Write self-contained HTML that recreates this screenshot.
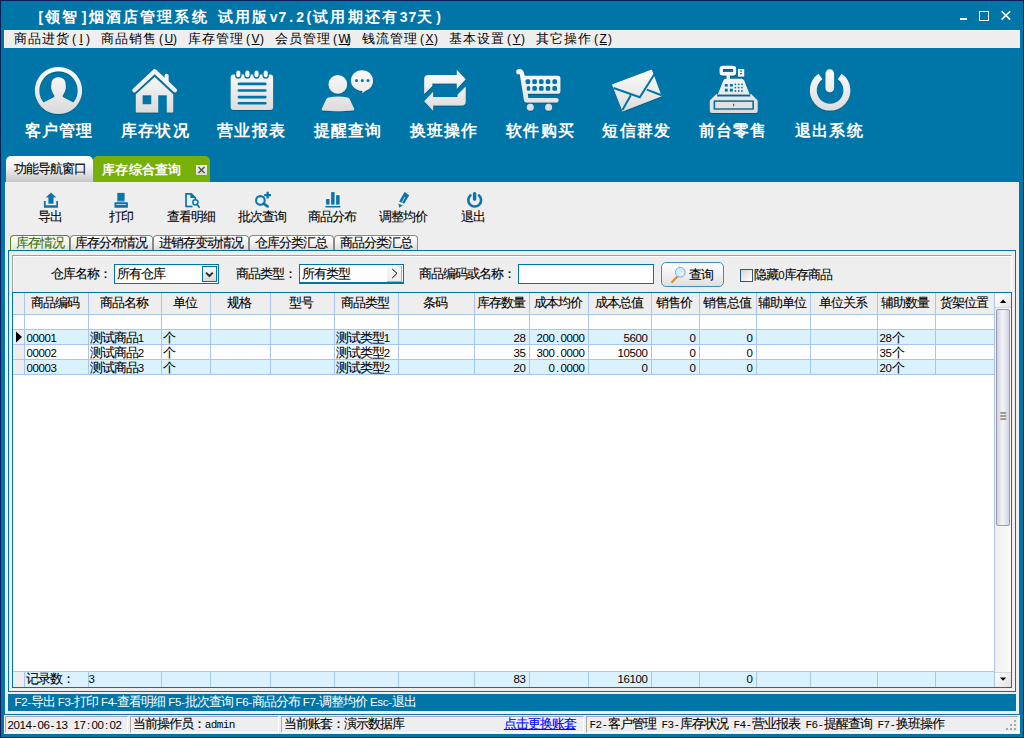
<!DOCTYPE html><html><head><meta charset="utf-8"><style>
html,body{margin:0;padding:0;}
body{width:1024px;height:738px;overflow:hidden;position:relative;background:#0075a8;font-family:"Liberation Sans", sans-serif;}
div{box-sizing:border-box;}
.t{position:absolute;white-space:nowrap;line-height:1;}
.t i{display:inline-block;font-style:normal;text-align:center;}
.t b{font-weight:inherit;-webkit-text-stroke:0.1px currentColor;}
</style></head><body><div style="position:absolute;left:0px;top:0px;width:1024px;height:738px;border:1px solid #0a1e5a;"></div>
<div class="t" style="left:36.5px;top:9.5px;color:#fff;font-family:'Liberation Sans',sans-serif;font-size:14.5px;font-weight:bold;"><span style="font-family:'Liberation Sans',sans-serif;font-size:14px"><i style="width:8.8px">[</i></span><span style="font-size:14.5px;letter-spacing:2.20px">领智</span><span style="font-family:'Liberation Sans',sans-serif;font-size:14px"><i style="width:8.8px">]</i></span><span style="font-size:14.5px;letter-spacing:2.20px">烟酒店管理系统</span><span style="font-family:'Liberation Sans',sans-serif;font-size:14px"><i style="width:8.8px">&nbsp;</i></span><span style="font-size:14.5px;letter-spacing:2.20px">试用版</span><span style="font-family:'Liberation Sans',sans-serif;font-size:14px"><i style="width:8.8px">v</i><i style="width:8.8px">7</i><i style="width:8.8px">.</i><i style="width:8.8px">2</i><i style="width:8.8px">(</i></span><span style="font-size:14.5px;letter-spacing:2.20px">试用期还有</span><span style="font-family:'Liberation Sans',sans-serif;font-size:14px"><i style="width:8.8px">3</i><i style="width:8.8px">7</i></span><span style="font-size:14.5px;letter-spacing:2.20px">天</span><span style="font-family:'Liberation Sans',sans-serif;font-size:14px"><i style="width:8.8px">)</i></span></div>
<div style="position:absolute;left:960px;top:18px;width:7px;height:2px;background:#fff;"></div>
<div style="position:absolute;left:979px;top:11px;width:9.5px;height:9.5px;border:1.5px solid #fff;"></div>
<svg style="position:absolute;left:1000px;top:10px" width="12" height="12"><path d="M1.6 1.2L10.2 9.6M10.2 1.2L1.6 9.6" stroke="#fff" stroke-width="1.6"/></svg>
<div style="position:absolute;left:4px;top:30px;width:1016px;height:18px;background:#eeeeee;border-top:1px solid #fbf6f2;border-left:1px solid #fbf6f2;"></div>
<div class="t" style="left:13.8px;top:33px;color:#000;font-family:'Liberation Sans',sans-serif;font-size:12.5px;"><span style="font-size:12.5px;letter-spacing:1.20px">商品进货</span><span style="font-family:'Liberation Sans',sans-serif;font-size:12px"><i style="width:7.0px">(</i><i style="width:7.0px"><u>I</u></i><i style="width:7.0px">)</i></span></div>
<div class="t" style="left:100.8px;top:33px;color:#000;font-family:'Liberation Sans',sans-serif;font-size:12.5px;"><span style="font-size:12.5px;letter-spacing:1.20px">商品销售</span><span style="font-family:'Liberation Sans',sans-serif;font-size:12px"><i style="width:7.0px">(</i><i style="width:7.0px"><u>U</u></i><i style="width:7.0px">)</i></span></div>
<div class="t" style="left:187.8px;top:33px;color:#000;font-family:'Liberation Sans',sans-serif;font-size:12.5px;"><span style="font-size:12.5px;letter-spacing:1.20px">库存管理</span><span style="font-family:'Liberation Sans',sans-serif;font-size:12px"><i style="width:7.0px">(</i><i style="width:7.0px"><u>V</u></i><i style="width:7.0px">)</i></span></div>
<div class="t" style="left:274.8px;top:33px;color:#000;font-family:'Liberation Sans',sans-serif;font-size:12.5px;"><span style="font-size:12.5px;letter-spacing:1.20px">会员管理</span><span style="font-family:'Liberation Sans',sans-serif;font-size:12px"><i style="width:7.0px">(</i><i style="width:7.0px"><u>W</u></i><i style="width:7.0px">)</i></span></div>
<div class="t" style="left:361.8px;top:33px;color:#000;font-family:'Liberation Sans',sans-serif;font-size:12.5px;"><span style="font-size:12.5px;letter-spacing:1.20px">钱流管理</span><span style="font-family:'Liberation Sans',sans-serif;font-size:12px"><i style="width:7.0px">(</i><i style="width:7.0px"><u>X</u></i><i style="width:7.0px">)</i></span></div>
<div class="t" style="left:448.8px;top:33px;color:#000;font-family:'Liberation Sans',sans-serif;font-size:12.5px;"><span style="font-size:12.5px;letter-spacing:1.20px">基本设置</span><span style="font-family:'Liberation Sans',sans-serif;font-size:12px"><i style="width:7.0px">(</i><i style="width:7.0px"><u>Y</u></i><i style="width:7.0px">)</i></span></div>
<div class="t" style="left:535.8px;top:33px;color:#000;font-family:'Liberation Sans',sans-serif;font-size:12.5px;"><span style="font-size:12.5px;letter-spacing:1.20px">其它操作</span><span style="font-family:'Liberation Sans',sans-serif;font-size:12px"><i style="width:7.0px">(</i><i style="width:7.0px"><u>Z</u></i><i style="width:7.0px">)</i></span></div>
<svg style="position:absolute;left:0;top:0" width="1024" height="160" viewBox="0 0 1024 160">
<defs><linearGradient id="wg" gradientUnits="userSpaceOnUse" x1="0" y1="66" x2="0" y2="115"><stop offset="0" stop-color="#ffffff"/><stop offset="1" stop-color="#d9d9d9"/></linearGradient><clipPath id="cc"><circle cx="58.5" cy="90.5" r="19.9"/></clipPath><filter id="sh" x="-10%" y="-10%" width="120%" height="130%"><feDropShadow dx="0" dy="1" stdDeviation="0.6" flood-color="#003050" flood-opacity="0.45"/></filter></defs>
<g fill="url(#wg)" filter="url(#sh)">
<path fill-rule="evenodd" d="M58.5 66.9A23.6 23.6 0 1 1 58.49 66.9ZM58.5 71.3A19.2 19.2 0 1 0 58.51 71.3Z"/>
<path clip-path="url(#cc)" d="M51.4 84C51.4 79.5 54.5 77.2 58.5 77.2C62.5 77.2 65.6 79.5 65.6 84L65.9 87.5C65.6 90.5 64 93.5 62.7 95.5L62.7 97L73.5 102.4L80 125L37 125L43.5 102.4L54.3 97L54.3 95.5C53 93.5 51.4 90.5 51.1 87.5Z"/>
<path d="M134.4 90.2L154.7 71.2L175 90.2" fill="none" stroke="url(#wg)" stroke-width="4.3" stroke-linecap="round" stroke-linejoin="round"/>
<path d="M164.6 75.6Q164.6 73.8 166.6 73.8Q168.6 73.8 168.6 75.6L168.6 83L164.6 79.3Z"/>
<path fill-rule="evenodd" d="M135.8 94.2L154.7 76.9L173.2 94.2L173.2 111.4Q173.2 112.4 172.2 112.4L166.8 112.4L166.8 95.2L158.2 95.2L158.2 112.4L136.8 112.4Q135.8 112.4 135.8 111.4ZM142.6 95.2L151.3 95.2L151.3 104.2L142.6 104.2Z"/>
<path fill-rule="evenodd" d="M233.7 74.4L270.1 74.4Q273.1 74.4 273.1 77.4L273.1 107.1Q273.1 110.1 270.1 110.1L233.7 110.1Q230.7 110.1 230.7 107.1L230.7 77.4Q230.7 74.4 233.7 74.4Z"/>
<ellipse cx="238.3" cy="74.4" rx="3.3" ry="4.4" fill="#0075a8" filter="none"/>
<ellipse cx="238.3" cy="73.9" rx="2.1" ry="3.3" fill="#fff" filter="none"/>
<ellipse cx="247.4" cy="74.4" rx="3.3" ry="4.4" fill="#0075a8" filter="none"/>
<ellipse cx="247.4" cy="73.9" rx="2.1" ry="3.3" fill="#fff" filter="none"/>
<ellipse cx="256.5" cy="74.4" rx="3.3" ry="4.4" fill="#0075a8" filter="none"/>
<ellipse cx="256.5" cy="73.9" rx="2.1" ry="3.3" fill="#fff" filter="none"/>
<ellipse cx="265.7" cy="74.4" rx="3.3" ry="4.4" fill="#0075a8" filter="none"/>
<ellipse cx="265.7" cy="73.9" rx="2.1" ry="3.3" fill="#fff" filter="none"/>
<rect x="237.6" y="82.60000000000001" width="29" height="2.6" rx="1.3" fill="#0075a8" filter="none"/>
<rect x="237.6" y="89.2" width="29" height="2.6" rx="1.3" fill="#0075a8" filter="none"/>
<rect x="237.6" y="95.8" width="29" height="2.6" rx="1.3" fill="#0075a8" filter="none"/>
<rect x="237.6" y="101.9" width="29" height="2.6" rx="1.3" fill="#0075a8" filter="none"/>
<circle cx="337.8" cy="84.4" r="9.3"/>
<path d="M328.5 97.6Q338 95.6 347.6 97.6Q349.3 98 349.9 99.5L354.2 108.8Q354.6 110.4 353 110.5Q338 111.8 323 110.5Q321.4 110.4 321.8 108.8L326.1 99.5Q326.7 98 328.5 97.6Z"/>
<path d="M362 70.3C368.2 70.3 373 74.8 373 80.7C373 86.2 369 89.8 365.5 90.8L362.2 93.2L362.5 91C356 90.5 351 86.3 351 80.7C351 74.8 355.8 70.3 362 70.3Z"/>
<circle cx="356.5" cy="80.6" r="1.5" fill="#0075a8" filter="none"/>
<circle cx="362.3" cy="80.6" r="1.5" fill="#0075a8" filter="none"/>
<circle cx="368.0" cy="80.6" r="1.5" fill="#0075a8" filter="none"/>
<path d="M424.2 94L424.2 79Q424.2 75 428.2 75L456.8 75L456.8 69.8L465.7 79.3L456.8 88.8L456.8 83.6L432.3 83.6L432.3 86Z"/>
<path d="M465.7 86.5L465.7 101.5Q465.7 105.5 461.7 105.5L433.1 105.5L433.1 110.7L424.2 101.2L433.1 91.7L433.1 96.9L457.6 96.9L457.6 94.5Z"/>
<path d="M516.2 71.5Q516.5 69 519.5 69Q523.5 69 524.2 74.2L525 75.8L557.9 75.8Q560.4 75.8 560.4 78.3L560.4 91.3Q560.4 93.8 557.9 93.8L527.8 93.8L528.3 97.9L556.4 97.9Q558.7 97.9 558.7 100.25Q558.7 102.6 556.4 102.6L526.4 102.6Q524.3 102.6 524 100.5L519.8 74.3L517.5 74.2Q516 73.8 516.2 71.5Z"/>
<rect x="525.6" y="79.2" width="4.6" height="4.8" rx="1.6" fill="#0075a8" filter="none"/>
<rect x="532.3" y="79.2" width="4.6" height="4.8" rx="1.6" fill="#0075a8" filter="none"/>
<rect x="539.0" y="79.2" width="4.6" height="4.8" rx="1.6" fill="#0075a8" filter="none"/>
<rect x="545.7" y="79.2" width="4.6" height="4.8" rx="1.6" fill="#0075a8" filter="none"/>
<rect x="552.4" y="79.2" width="4.6" height="4.8" rx="1.6" fill="#0075a8" filter="none"/>
<rect x="526.8" y="86.0" width="3.4" height="4.8" rx="1.6" fill="#0075a8" filter="none"/>
<rect x="532.3" y="86.0" width="4.6" height="4.8" rx="1.6" fill="#0075a8" filter="none"/>
<rect x="539.0" y="86.0" width="4.6" height="4.8" rx="1.6" fill="#0075a8" filter="none"/>
<rect x="545.7" y="86.0" width="4.6" height="4.8" rx="1.6" fill="#0075a8" filter="none"/>
<rect x="552.4" y="86.0" width="4.6" height="4.8" rx="1.6" fill="#0075a8" filter="none"/>
<circle cx="530.3" cy="107.3" r="3.5"/><circle cx="548.6" cy="107.3" r="3.5"/>
<path d="M612.7 84.8L651.4 70.3L660.9 96L622.9 110.8Z" stroke="url(#wg)" stroke-width="1.2" stroke-linejoin="round"/>
<g filter="none" fill="none" stroke="#0075a8" stroke-width="2"><path d="M613.5 88L639.8 97.3L655 73.2"/><path d="M622.5 110L630.8 95.2"/><path d="M646.8 89.6L661.5 95.2"/></g>
<path fill-rule="evenodd" d="M722.6 65.7L733.1 65.7Q736.1 65.7 736.1 68.7L736.1 72.5Q736.1 75.5 733.1 75.5L729.9 75.5L729.9 78.8L741.7 78.8Q743.4 78.8 744.2 80.5L749.7 94.6L717.8 94.6L723.3 80.5Q724 78.8 725.8 78.8L726.6 78.8L726.6 75.5L722.6 75.5Q719.6 75.5 719.6 72.5L719.6 68.7Q719.6 65.7 722.6 65.7ZM722.9 69L733.2 69L733.2 71.9L722.9 71.9Z"/>
<rect x="738" y="69" width="6.2" height="7.6"/>
<g fill="#0075a8" filter="none"><rect x="724.8" y="84" width="2.9" height="2.6"/><rect x="729.9" y="84" width="2.9" height="2.6"/><rect x="724.8" y="88.7" width="2.9" height="2.9"/><rect x="729.9" y="88.7" width="2.9" height="2.9"/>
<circle cx="735.4" cy="84.3" r="0.9"/>
<circle cx="735.4" cy="87.6" r="0.9"/>
<circle cx="735.4" cy="90.9" r="0.9"/>
<circle cx="738.7" cy="84.3" r="0.9"/>
<circle cx="738.7" cy="87.6" r="0.9"/>
<circle cx="738.7" cy="90.9" r="0.9"/>
<circle cx="742" cy="84.3" r="0.9"/>
<circle cx="742" cy="87.6" r="0.9"/>
<circle cx="742" cy="90.9" r="0.9"/>
<rect x="740" y="70.5" width="2" height="1.2"/><rect x="740" y="73" width="2" height="1.2"/></g>
<path fill-rule="evenodd" d="M709.8 100.6L716.4 94.1L717.4 94.1L717 96.4L750.5 96.4L750.1 94.1L751.1 94.1L757.7 100.6L757.7 110.4Q757.7 112.9 755.2 112.9L712.3 112.9Q709.8 112.9 709.8 110.4ZM714.2 100.3L753.3 100.3Q754 100.3 754 101L754 109.1Q754 109.8 753.3 109.8L714.2 109.8Q713.5 109.8 713.5 109.1L713.5 101Q713.5 100.3 714.2 100.3Z"/>
<rect x="715.2" y="101.9" width="37.1" height="6.3" fill="#e2e2e2" filter="none"/>
<path d="M733 103.3L734.6 105L733 106.7Z" fill="#0075a8" filter="none"/>
<path d="M820.5 76.5A16.8 16.8 0 1 0 839.7 76.5" fill="none" stroke="url(#wg)" stroke-width="6.9"/>
<rect x="825.5" y="69.2" width="8.6" height="23.1" rx="4.3"/>
</g></svg>
<div class="t" style="left:13.5px;width:90px;text-align:center;top:123px;color:#fff;font-weight:bold;font-size:15.5px;letter-spacing:1.2px;text-indent:1.2px;">客户管理</div>
<div class="t" style="left:109.8px;width:90px;text-align:center;top:123px;color:#fff;font-weight:bold;font-size:15.5px;letter-spacing:1.2px;text-indent:1.2px;">库存状况</div>
<div class="t" style="left:206.1px;width:90px;text-align:center;top:123px;color:#fff;font-weight:bold;font-size:15.5px;letter-spacing:1.2px;text-indent:1.2px;">营业报表</div>
<div class="t" style="left:302.4px;width:90px;text-align:center;top:123px;color:#fff;font-weight:bold;font-size:15.5px;letter-spacing:1.2px;text-indent:1.2px;">提醒查询</div>
<div class="t" style="left:398.7px;width:90px;text-align:center;top:123px;color:#fff;font-weight:bold;font-size:15.5px;letter-spacing:1.2px;text-indent:1.2px;">换班操作</div>
<div class="t" style="left:495.0px;width:90px;text-align:center;top:123px;color:#fff;font-weight:bold;font-size:15.5px;letter-spacing:1.2px;text-indent:1.2px;">软件购买</div>
<div class="t" style="left:591.3px;width:90px;text-align:center;top:123px;color:#fff;font-weight:bold;font-size:15.5px;letter-spacing:1.2px;text-indent:1.2px;">短信群发</div>
<div class="t" style="left:687.6px;width:90px;text-align:center;top:123px;color:#fff;font-weight:bold;font-size:15.5px;letter-spacing:1.2px;text-indent:1.2px;">前台零售</div>
<div class="t" style="left:783.9px;width:90px;text-align:center;top:123px;color:#fff;font-weight:bold;font-size:15.5px;letter-spacing:1.2px;text-indent:1.2px;">退出系统</div>
<div style="position:absolute;left:6px;top:156px;width:87px;height:26px;border-radius:5px 5px 0 0;background:linear-gradient(#ffffff,#f4f4f4 40%,#c8c8c8);"></div>
<div class="t" style="left:13.8px;top:163px;color:#000;font-family:'Liberation Sans',sans-serif;font-size:12.6px;"><b style="font-size:12.6px;letter-spacing:-1.00px">功能导航窗口</b></div>
<div style="position:absolute;left:93px;top:156px;width:117px;height:26px;border-radius:5px 5px 0 0;background:#78b00a;"></div>
<div class="t" style="left:102.3px;top:163.5px;color:#fff;font-family:'Liberation Sans',sans-serif;font-size:12.5px;font-weight:bold;"><span style="font-size:12.5px;letter-spacing:0.20px">库存综合查询</span></div>
<div style="position:absolute;left:196px;top:165px;width:11px;height:10px;background:linear-gradient(#f4f4f4,#d8d8d8);"></div>
<svg style="position:absolute;left:196px;top:165px" width="11" height="10"><path d="M2.5 2L8.5 8M8.5 2L2.5 8" stroke="#4a5a3a" stroke-width="1.5"/></svg>
<div style="position:absolute;left:5px;top:182px;width:1014px;height:532px;background:#eeeeee;border-left:1px solid #fbfaf8;"></div>
<svg style="position:absolute;left:0;top:180px" width="520" height="40" viewBox="0 180 520 40">
<g fill="#0a74ad">
<path d="M51 192.5L56.2 197.6L53.5 197.6L53.5 203.8L48.4 203.8L48.4 197.6L45.8 197.6Z"/>
<path d="M43.9 200.9L45.7 200.9L45.7 205.2L56.3 205.2L56.3 200.9L58 200.9L58 207.7L43.9 207.7Z"/>
<rect x="117.3" y="192.9" width="7.3" height="8"/>
<rect x="117.3" y="200.9" width="7.3" height="1.4" fill="#7ab0d0"/>
<path fill-rule="evenodd" d="M114.5 202.3L127.9 202.3L127.9 207.7L114.5 207.7ZM116.2 204.2L126 204.2L126 205L116.2 205Z"/>
<path d="M186 207V193.8H191.3L195.3 197.8V199.2" fill="none" stroke="#0a74ad" stroke-width="1.7"/>
<path d="M186 206.5H192.5" fill="none" stroke="#0a74ad" stroke-width="1.7"/>
<path d="M190.4 194L195.5 198.1L190.4 198.1Z"/>
<circle cx="195.4" cy="202.3" r="2.6" fill="none" stroke="#0a74ad" stroke-width="1.5"/>
<path d="M197 204.3L199.2 207.3" stroke="#0a74ad" stroke-width="1.6" stroke-linecap="round"/>
<circle cx="260.4" cy="200.4" r="4.3" fill="none" stroke="#0a74ad" stroke-width="2.1"/>
<path d="M263.6 203.6L267.6 206.4" stroke="#0a74ad" stroke-width="2.6" stroke-linecap="round"/>
<path d="M266.5 191.8H268.8V194H271V196.2H268.8V198.4H266.5V196.2H264.2V194H266.5Z"/>
<rect x="326.1" y="199" width="3.4" height="5.6"/><rect x="331.1" y="192.1" width="3.5" height="12.5"/><rect x="336.1" y="195.2" width="3.5" height="9.4"/>
<path d="M325.1 205.9H340.7L340 207.6H325.8Z"/>
<path d="M404.5 192.1L409.2 195.2L404.2 203.8L399.2 201.5Z"/>
<path d="M404.9 197L402.2 202.3" stroke="#eeeeee" stroke-width="0.8"/>
<path d="M398.5 203.4L402.8 205.4L399.3 207.7Z"/>
<path d="M470.4 195.4A6.4 6.4 0 1 0 479 195.4" fill="none" stroke="#0a74ad" stroke-width="2.6" stroke-linecap="round"/>
<rect x="472.9" y="192" width="3.4" height="8.8" rx="1.6"/>
</g></svg>
<div class="t" style="left:38.2px;top:211px;color:#000;font-family:'Liberation Sans',sans-serif;font-size:12.6px;"><b style="font-size:12.6px;letter-spacing:-1.00px">导出</b></div>
<div class="t" style="left:108.7px;top:211px;color:#000;font-family:'Liberation Sans',sans-serif;font-size:12.6px;"><b style="font-size:12.6px;letter-spacing:-1.00px">打印</b></div>
<div class="t" style="left:167.2px;top:211px;color:#000;font-family:'Liberation Sans',sans-serif;font-size:12.6px;"><b style="font-size:12.6px;letter-spacing:-1.00px">查看明细</b></div>
<div class="t" style="left:237.7px;top:211px;color:#000;font-family:'Liberation Sans',sans-serif;font-size:12.6px;"><b style="font-size:12.6px;letter-spacing:-1.00px">批次查询</b></div>
<div class="t" style="left:308.2px;top:211px;color:#000;font-family:'Liberation Sans',sans-serif;font-size:12.6px;"><b style="font-size:12.6px;letter-spacing:-1.00px">商品分布</b></div>
<div class="t" style="left:378.7px;top:211px;color:#000;font-family:'Liberation Sans',sans-serif;font-size:12.6px;"><b style="font-size:12.6px;letter-spacing:-1.00px">调整均价</b></div>
<div class="t" style="left:461.2px;top:211px;color:#000;font-family:'Liberation Sans',sans-serif;font-size:12.6px;"><b style="font-size:12.6px;letter-spacing:-1.00px">退出</b></div>
<div style="position:absolute;left:10px;top:235px;width:60px;height:16px;border:1.5px solid #5a8a18;border-bottom:none;border-radius:4px 4px 0 0;background:linear-gradient(#ffffff,#f4f8f0 40%,#d8e8d4);"></div>
<div class="t" style="left:15.8px;top:237px;color:#3f6e08;font-family:'Liberation Sans',sans-serif;font-size:12.6px;"><b style="font-size:12.6px;letter-spacing:-1.00px">库存情况</b></div>
<div style="position:absolute;left:70px;top:235px;width:83px;height:16px;border:1px solid #8a8a8a;border-bottom:none;border-radius:4px 4px 0 0;background:linear-gradient(#ffffff,#f4f4f4 40%,#d8d8d8);"></div>
<div class="t" style="left:75.3px;top:237px;color:#000;font-family:'Liberation Sans',sans-serif;font-size:12.6px;"><b style="font-size:12.6px;letter-spacing:-1.00px">库存分布情况</b></div>
<div style="position:absolute;left:153px;top:235px;width:96px;height:16px;border:1px solid #8a8a8a;border-bottom:none;border-radius:4px 4px 0 0;background:linear-gradient(#ffffff,#f4f4f4 40%,#d8d8d8);"></div>
<div class="t" style="left:158.8px;top:237px;color:#000;font-family:'Liberation Sans',sans-serif;font-size:12.6px;"><b style="font-size:12.6px;letter-spacing:-1.00px">进销存变动情况</b></div>
<div style="position:absolute;left:249px;top:235px;width:85px;height:16px;border:1px solid #8a8a8a;border-bottom:none;border-radius:4px 4px 0 0;background:linear-gradient(#ffffff,#f4f4f4 40%,#d8d8d8);"></div>
<div class="t" style="left:255.3px;top:237px;color:#000;font-family:'Liberation Sans',sans-serif;font-size:12.6px;"><b style="font-size:12.6px;letter-spacing:-1.00px">仓库分类汇总</b></div>
<div style="position:absolute;left:334px;top:235px;width:84px;height:16px;border:1px solid #8a8a8a;border-bottom:none;border-radius:4px 4px 0 0;background:linear-gradient(#ffffff,#f4f4f4 40%,#d8d8d8);"></div>
<div class="t" style="left:339.8px;top:237px;color:#000;font-family:'Liberation Sans',sans-serif;font-size:12.6px;"><b style="font-size:12.6px;letter-spacing:-1.00px">商品分类汇总</b></div>
<div style="position:absolute;left:8px;top:250px;width:1008px;height:442px;border:1px solid #0075a8;background:#eeeeee;"></div>
<div style="position:absolute;left:12px;top:255px;width:1000px;height:38px;border-top:1px solid #a0a0a0;border-left:1px solid #a0a0a0;border-right:1px solid #fff;box-shadow:inset 1px 1px #fff;"></div>
<div class="t" style="left:50.8px;top:268px;color:#000;font-family:'Liberation Sans',sans-serif;font-size:12.6px;"><b style="font-size:12.6px;letter-spacing:-1.00px">仓库名称：</b></div>
<div style="position:absolute;left:114px;top:264px;width:105px;height:20px;border:1.5px solid #0075a8;background:#fff;"></div>
<div style="position:absolute;left:202px;top:266px;width:14.8px;height:16.2px;border:1.5px solid #0075a8;background:linear-gradient(#fafafa,#d8d8d8);"></div>
<svg style="position:absolute;left:202px;top:266px" width="15" height="16"><path d="M4 6.6L7.4 10L10.8 6.6" fill="none" stroke="#333" stroke-width="2"/></svg>
<div class="t" style="left:116.8px;top:268px;color:#000;font-family:'Liberation Sans',sans-serif;font-size:12.6px;"><b style="font-size:12.6px;letter-spacing:-1.00px">所有仓库</b></div>
<div class="t" style="left:235.8px;top:268px;color:#000;font-family:'Liberation Sans',sans-serif;font-size:12.6px;"><b style="font-size:12.6px;letter-spacing:-1.00px">商品类型：</b></div>
<div style="position:absolute;left:299px;top:264px;width:105px;height:20px;border:1.5px solid #0075a8;border-bottom-width:2px;background:#fff;"></div>
<div style="position:absolute;left:387px;top:266px;width:15px;height:16px;background:linear-gradient(#f6f6f6,#eeeeee);border-right:1.5px solid #b0b0b0;border-bottom:1.5px solid #b8b0a8;"></div>
<svg style="position:absolute;left:387px;top:266px" width="15" height="16"><path d="M5.2 3L10 7.4L5.2 12" fill="none" stroke="#000" stroke-width="1"/></svg>
<div class="t" style="left:301.8px;top:268px;color:#000;font-family:'Liberation Sans',sans-serif;font-size:12.6px;"><b style="font-size:12.6px;letter-spacing:-1.00px">所有类型</b></div>
<div class="t" style="left:418.8px;top:268px;color:#000;font-family:'Liberation Sans',sans-serif;font-size:12.6px;"><b style="font-size:12.6px;letter-spacing:-1.00px">商品编码或名称：</b></div>
<div style="position:absolute;left:518px;top:264px;width:136px;height:20px;border:1.5px solid #0075a8;background:#fff;"></div>
<div style="position:absolute;left:661px;top:262px;width:62.5px;height:24.6px;border:1.5px solid #3a90c0;border-radius:5px;background:linear-gradient(#ffffff,#f0f0f0 50%,#e0e0e0);"></div>
<svg style="position:absolute;left:668px;top:264px" width="20" height="20"><path d="M9.5 12.5L4 18" stroke="#d89030" stroke-width="2.2" stroke-linecap="round"/><circle cx="12.3" cy="8.3" r="4.9" fill="#c8f2fa" stroke="#a098e0" stroke-width="1"/><circle cx="14" cy="10" r="1.3" fill="#fff"/></svg>
<div class="t" style="left:688.8px;top:269px;color:#000;font-family:'Liberation Sans',sans-serif;font-size:12.6px;"><b style="font-size:12.6px;letter-spacing:-1.00px">查询</b></div>
<div style="position:absolute;left:740px;top:269px;width:13px;height:13px;border:1.5px solid #2a5a8a;background:linear-gradient(135deg,#d8d8d0,#ffffff);"></div>
<div class="t" style="left:754.3px;top:269px;color:#000;font-family:'Liberation Sans',sans-serif;font-size:12.6px;"><b style="font-size:12.6px;letter-spacing:-1.00px">隐藏</b><span style="font-family:'Liberation Sans',sans-serif;font-size:11.5px"><i style="width:6.0px">0</i></span><b style="font-size:12.6px;letter-spacing:-1.00px">库存商品</b></div>
<div style="position:absolute;left:12px;top:292px;width:1000px;height:396px;border:1px solid #0075a8;background:#fff;"></div>
<div style="position:absolute;left:13px;top:293px;width:982px;height:21px;background:#eeeeee;"></div>
<div style="position:absolute;left:13px;top:314px;width:982px;height:15px;background:#fff;"></div>
<div style="position:absolute;left:24px;top:329px;width:971px;height:15px;background:#daf2fe;"></div>
<div style="position:absolute;left:24px;top:359px;width:971px;height:15px;background:#daf2fe;"></div>
<div style="position:absolute;left:13px;top:329px;width:11px;height:45px;background:#eeeeee;"></div>
<div style="position:absolute;left:13px;top:671px;width:982px;height:16px;background:#daf2fe;"></div>
<div style="position:absolute;left:13px;top:671px;width:11px;height:16px;background:#eeeeee;"></div>
<div style="position:absolute;left:13px;top:314px;width:982px;height:1px;background:#a8c4f0;"></div>
<div style="position:absolute;left:13px;top:329px;width:982px;height:1px;background:#a8c4f0;"></div>
<div style="position:absolute;left:13px;top:344px;width:982px;height:1px;background:#a8c4f0;"></div>
<div style="position:absolute;left:13px;top:359px;width:982px;height:1px;background:#a8c4f0;"></div>
<div style="position:absolute;left:13px;top:374px;width:982px;height:1px;background:#a8c4f0;"></div>
<div style="position:absolute;left:13px;top:671px;width:982px;height:1px;background:#a8c4f0;"></div>
<div style="position:absolute;left:24px;top:293px;width:1px;height:81px;background:#a8c4f0;"></div>
<div style="position:absolute;left:24px;top:671px;width:1px;height:16px;background:#a8c4f0;"></div>
<div style="position:absolute;left:88px;top:293px;width:1px;height:81px;background:#a8c4f0;"></div>
<div style="position:absolute;left:88px;top:671px;width:1px;height:16px;background:#a8c4f0;"></div>
<div style="position:absolute;left:161px;top:293px;width:1px;height:81px;background:#a8c4f0;"></div>
<div style="position:absolute;left:161px;top:671px;width:1px;height:16px;background:#a8c4f0;"></div>
<div style="position:absolute;left:210px;top:293px;width:1px;height:81px;background:#a8c4f0;"></div>
<div style="position:absolute;left:210px;top:671px;width:1px;height:16px;background:#a8c4f0;"></div>
<div style="position:absolute;left:270px;top:293px;width:1px;height:81px;background:#a8c4f0;"></div>
<div style="position:absolute;left:270px;top:671px;width:1px;height:16px;background:#a8c4f0;"></div>
<div style="position:absolute;left:334px;top:293px;width:1px;height:81px;background:#a8c4f0;"></div>
<div style="position:absolute;left:334px;top:671px;width:1px;height:16px;background:#a8c4f0;"></div>
<div style="position:absolute;left:398px;top:293px;width:1px;height:81px;background:#a8c4f0;"></div>
<div style="position:absolute;left:398px;top:671px;width:1px;height:16px;background:#a8c4f0;"></div>
<div style="position:absolute;left:474px;top:293px;width:1px;height:81px;background:#a8c4f0;"></div>
<div style="position:absolute;left:474px;top:671px;width:1px;height:16px;background:#a8c4f0;"></div>
<div style="position:absolute;left:529px;top:293px;width:1px;height:81px;background:#a8c4f0;"></div>
<div style="position:absolute;left:529px;top:671px;width:1px;height:16px;background:#a8c4f0;"></div>
<div style="position:absolute;left:588px;top:293px;width:1px;height:81px;background:#a8c4f0;"></div>
<div style="position:absolute;left:588px;top:671px;width:1px;height:16px;background:#a8c4f0;"></div>
<div style="position:absolute;left:651px;top:293px;width:1px;height:81px;background:#a8c4f0;"></div>
<div style="position:absolute;left:651px;top:671px;width:1px;height:16px;background:#a8c4f0;"></div>
<div style="position:absolute;left:699px;top:293px;width:1px;height:81px;background:#a8c4f0;"></div>
<div style="position:absolute;left:699px;top:671px;width:1px;height:16px;background:#a8c4f0;"></div>
<div style="position:absolute;left:756px;top:293px;width:1px;height:81px;background:#a8c4f0;"></div>
<div style="position:absolute;left:756px;top:671px;width:1px;height:16px;background:#a8c4f0;"></div>
<div style="position:absolute;left:810px;top:293px;width:1px;height:81px;background:#a8c4f0;"></div>
<div style="position:absolute;left:810px;top:671px;width:1px;height:16px;background:#a8c4f0;"></div>
<div style="position:absolute;left:877px;top:293px;width:1px;height:81px;background:#a8c4f0;"></div>
<div style="position:absolute;left:877px;top:671px;width:1px;height:16px;background:#a8c4f0;"></div>
<div style="position:absolute;left:935px;top:293px;width:1px;height:81px;background:#a8c4f0;"></div>
<div style="position:absolute;left:935px;top:671px;width:1px;height:16px;background:#a8c4f0;"></div>
<div style="position:absolute;left:994px;top:293px;width:1px;height:81px;background:#a8c4f0;"></div>
<div style="position:absolute;left:994px;top:671px;width:1px;height:16px;background:#a8c4f0;"></div>
<div style="position:absolute;left:994px;top:293px;width:1px;height:394px;background:#a8c4f0;"></div>
<div class="t" style="left:31.3px;top:297px;color:#000;font-family:'Liberation Sans',sans-serif;font-size:12.6px;"><b style="font-size:12.6px;letter-spacing:-1.00px">商品编码</b></div>
<div class="t" style="left:99.8px;top:297px;color:#000;font-family:'Liberation Sans',sans-serif;font-size:12.6px;"><b style="font-size:12.6px;letter-spacing:-1.00px">商品名称</b></div>
<div class="t" style="left:172.8px;top:297px;color:#000;font-family:'Liberation Sans',sans-serif;font-size:12.6px;"><b style="font-size:12.6px;letter-spacing:-1.00px">单位</b></div>
<div class="t" style="left:227.3px;top:297px;color:#000;font-family:'Liberation Sans',sans-serif;font-size:12.6px;"><b style="font-size:12.6px;letter-spacing:-1.00px">规格</b></div>
<div class="t" style="left:289.3px;top:297px;color:#000;font-family:'Liberation Sans',sans-serif;font-size:12.6px;"><b style="font-size:12.6px;letter-spacing:-1.00px">型号</b></div>
<div class="t" style="left:341.3px;top:297px;color:#000;font-family:'Liberation Sans',sans-serif;font-size:12.6px;"><b style="font-size:12.6px;letter-spacing:-1.00px">商品类型</b></div>
<div class="t" style="left:423.3px;top:297px;color:#000;font-family:'Liberation Sans',sans-serif;font-size:12.6px;"><b style="font-size:12.6px;letter-spacing:-1.00px">条码</b></div>
<div class="t" style="left:476.8px;top:297px;color:#000;font-family:'Liberation Sans',sans-serif;font-size:12.6px;"><b style="font-size:12.6px;letter-spacing:-1.00px">库存数量</b></div>
<div class="t" style="left:533.8px;top:297px;color:#000;font-family:'Liberation Sans',sans-serif;font-size:12.6px;"><b style="font-size:12.6px;letter-spacing:-1.00px">成本均价</b></div>
<div class="t" style="left:594.8px;top:297px;color:#000;font-family:'Liberation Sans',sans-serif;font-size:12.6px;"><b style="font-size:12.6px;letter-spacing:-1.00px">成本总值</b></div>
<div class="t" style="left:656.3px;top:297px;color:#000;font-family:'Liberation Sans',sans-serif;font-size:12.6px;"><b style="font-size:12.6px;letter-spacing:-1.00px">销售价</b></div>
<div class="t" style="left:702.8px;top:297px;color:#000;font-family:'Liberation Sans',sans-serif;font-size:12.6px;"><b style="font-size:12.6px;letter-spacing:-1.00px">销售总值</b></div>
<div class="t" style="left:758.3px;top:297px;color:#000;font-family:'Liberation Sans',sans-serif;font-size:12.6px;"><b style="font-size:12.6px;letter-spacing:-1.00px">辅助单位</b></div>
<div class="t" style="left:818.8px;top:297px;color:#000;font-family:'Liberation Sans',sans-serif;font-size:12.6px;"><b style="font-size:12.6px;letter-spacing:-1.00px">单位关系</b></div>
<div class="t" style="left:881.3px;top:297px;color:#000;font-family:'Liberation Sans',sans-serif;font-size:12.6px;"><b style="font-size:12.6px;letter-spacing:-1.00px">辅助数量</b></div>
<div class="t" style="left:939.8px;top:297px;color:#000;font-family:'Liberation Sans',sans-serif;font-size:12.6px;"><b style="font-size:12.6px;letter-spacing:-1.00px">货架位置</b></div>
<div class="t" style="left:26.5px;top:331.5px;color:#000;font-family:'Liberation Sans',sans-serif;font-size:12.6px;"><span style="font-family:'Liberation Sans',sans-serif;font-size:11.5px"><i style="width:6.0px">0</i><i style="width:6.0px">0</i><i style="width:6.0px">0</i><i style="width:6.0px">0</i><i style="width:6.0px">1</i></span></div>
<div class="t" style="left:89.8px;top:331.5px;color:#000;font-family:'Liberation Sans',sans-serif;font-size:12.6px;"><b style="font-size:12.6px;letter-spacing:-1.00px">测试商品</b><span style="font-family:'Liberation Sans',sans-serif;font-size:11.5px"><i style="width:6.0px">1</i></span></div>
<div class="t" style="left:162.8px;top:331.5px;color:#000;font-family:'Liberation Sans',sans-serif;font-size:12.6px;"><b style="font-size:12.6px;letter-spacing:-1.00px">个</b></div>
<div class="t" style="left:335.8px;top:331.5px;color:#000;font-family:'Liberation Sans',sans-serif;font-size:12.6px;"><b style="font-size:12.6px;letter-spacing:-1.00px">测试类型</b><span style="font-family:'Liberation Sans',sans-serif;font-size:11.5px"><i style="width:6.0px">1</i></span></div>
<div class="t" style="left:513.5px;top:331.5px;color:#000;font-family:'Liberation Sans',sans-serif;font-size:12.6px;"><span style="font-family:'Liberation Sans',sans-serif;font-size:11.5px"><i style="width:6.0px">2</i><i style="width:6.0px">8</i></span></div>
<div class="t" style="left:536.5px;top:331.5px;color:#000;font-family:'Liberation Sans',sans-serif;font-size:12.6px;"><span style="font-family:'Liberation Sans',sans-serif;font-size:11.5px"><i style="width:6.0px">2</i><i style="width:6.0px">0</i><i style="width:6.0px">0</i><i style="width:6.0px">.</i><i style="width:6.0px">0</i><i style="width:6.0px">0</i><i style="width:6.0px">0</i><i style="width:6.0px">0</i></span></div>
<div class="t" style="left:623.5px;top:331.5px;color:#000;font-family:'Liberation Sans',sans-serif;font-size:12.6px;"><span style="font-family:'Liberation Sans',sans-serif;font-size:11.5px"><i style="width:6.0px">5</i><i style="width:6.0px">6</i><i style="width:6.0px">0</i><i style="width:6.0px">0</i></span></div>
<div class="t" style="left:689.5px;top:331.5px;color:#000;font-family:'Liberation Sans',sans-serif;font-size:12.6px;"><span style="font-family:'Liberation Sans',sans-serif;font-size:11.5px"><i style="width:6.0px">0</i></span></div>
<div class="t" style="left:746.5px;top:331.5px;color:#000;font-family:'Liberation Sans',sans-serif;font-size:12.6px;"><span style="font-family:'Liberation Sans',sans-serif;font-size:11.5px"><i style="width:6.0px">0</i></span></div>
<div class="t" style="left:879.5px;top:331.5px;color:#000;font-family:'Liberation Sans',sans-serif;font-size:12.6px;"><span style="font-family:'Liberation Sans',sans-serif;font-size:11.5px"><i style="width:6.0px">2</i><i style="width:6.0px">8</i></span><b style="font-size:12.6px;letter-spacing:-1.00px">个</b></div>
<div class="t" style="left:26.5px;top:346.5px;color:#000;font-family:'Liberation Sans',sans-serif;font-size:12.6px;"><span style="font-family:'Liberation Sans',sans-serif;font-size:11.5px"><i style="width:6.0px">0</i><i style="width:6.0px">0</i><i style="width:6.0px">0</i><i style="width:6.0px">0</i><i style="width:6.0px">2</i></span></div>
<div class="t" style="left:89.8px;top:346.5px;color:#000;font-family:'Liberation Sans',sans-serif;font-size:12.6px;"><b style="font-size:12.6px;letter-spacing:-1.00px">测试商品</b><span style="font-family:'Liberation Sans',sans-serif;font-size:11.5px"><i style="width:6.0px">2</i></span></div>
<div class="t" style="left:162.8px;top:346.5px;color:#000;font-family:'Liberation Sans',sans-serif;font-size:12.6px;"><b style="font-size:12.6px;letter-spacing:-1.00px">个</b></div>
<div class="t" style="left:335.8px;top:346.5px;color:#000;font-family:'Liberation Sans',sans-serif;font-size:12.6px;"><b style="font-size:12.6px;letter-spacing:-1.00px">测试类型</b><span style="font-family:'Liberation Sans',sans-serif;font-size:11.5px"><i style="width:6.0px">2</i></span></div>
<div class="t" style="left:513.5px;top:346.5px;color:#000;font-family:'Liberation Sans',sans-serif;font-size:12.6px;"><span style="font-family:'Liberation Sans',sans-serif;font-size:11.5px"><i style="width:6.0px">3</i><i style="width:6.0px">5</i></span></div>
<div class="t" style="left:536.5px;top:346.5px;color:#000;font-family:'Liberation Sans',sans-serif;font-size:12.6px;"><span style="font-family:'Liberation Sans',sans-serif;font-size:11.5px"><i style="width:6.0px">3</i><i style="width:6.0px">0</i><i style="width:6.0px">0</i><i style="width:6.0px">.</i><i style="width:6.0px">0</i><i style="width:6.0px">0</i><i style="width:6.0px">0</i><i style="width:6.0px">0</i></span></div>
<div class="t" style="left:617.5px;top:346.5px;color:#000;font-family:'Liberation Sans',sans-serif;font-size:12.6px;"><span style="font-family:'Liberation Sans',sans-serif;font-size:11.5px"><i style="width:6.0px">1</i><i style="width:6.0px">0</i><i style="width:6.0px">5</i><i style="width:6.0px">0</i><i style="width:6.0px">0</i></span></div>
<div class="t" style="left:689.5px;top:346.5px;color:#000;font-family:'Liberation Sans',sans-serif;font-size:12.6px;"><span style="font-family:'Liberation Sans',sans-serif;font-size:11.5px"><i style="width:6.0px">0</i></span></div>
<div class="t" style="left:746.5px;top:346.5px;color:#000;font-family:'Liberation Sans',sans-serif;font-size:12.6px;"><span style="font-family:'Liberation Sans',sans-serif;font-size:11.5px"><i style="width:6.0px">0</i></span></div>
<div class="t" style="left:879.5px;top:346.5px;color:#000;font-family:'Liberation Sans',sans-serif;font-size:12.6px;"><span style="font-family:'Liberation Sans',sans-serif;font-size:11.5px"><i style="width:6.0px">3</i><i style="width:6.0px">5</i></span><b style="font-size:12.6px;letter-spacing:-1.00px">个</b></div>
<div class="t" style="left:26.5px;top:361.5px;color:#000;font-family:'Liberation Sans',sans-serif;font-size:12.6px;"><span style="font-family:'Liberation Sans',sans-serif;font-size:11.5px"><i style="width:6.0px">0</i><i style="width:6.0px">0</i><i style="width:6.0px">0</i><i style="width:6.0px">0</i><i style="width:6.0px">3</i></span></div>
<div class="t" style="left:89.8px;top:361.5px;color:#000;font-family:'Liberation Sans',sans-serif;font-size:12.6px;"><b style="font-size:12.6px;letter-spacing:-1.00px">测试商品</b><span style="font-family:'Liberation Sans',sans-serif;font-size:11.5px"><i style="width:6.0px">3</i></span></div>
<div class="t" style="left:162.8px;top:361.5px;color:#000;font-family:'Liberation Sans',sans-serif;font-size:12.6px;"><b style="font-size:12.6px;letter-spacing:-1.00px">个</b></div>
<div class="t" style="left:335.8px;top:361.5px;color:#000;font-family:'Liberation Sans',sans-serif;font-size:12.6px;"><b style="font-size:12.6px;letter-spacing:-1.00px">测试类型</b><span style="font-family:'Liberation Sans',sans-serif;font-size:11.5px"><i style="width:6.0px">2</i></span></div>
<div class="t" style="left:513.5px;top:361.5px;color:#000;font-family:'Liberation Sans',sans-serif;font-size:12.6px;"><span style="font-family:'Liberation Sans',sans-serif;font-size:11.5px"><i style="width:6.0px">2</i><i style="width:6.0px">0</i></span></div>
<div class="t" style="left:548.5px;top:361.5px;color:#000;font-family:'Liberation Sans',sans-serif;font-size:12.6px;"><span style="font-family:'Liberation Sans',sans-serif;font-size:11.5px"><i style="width:6.0px">0</i><i style="width:6.0px">.</i><i style="width:6.0px">0</i><i style="width:6.0px">0</i><i style="width:6.0px">0</i><i style="width:6.0px">0</i></span></div>
<div class="t" style="left:641.5px;top:361.5px;color:#000;font-family:'Liberation Sans',sans-serif;font-size:12.6px;"><span style="font-family:'Liberation Sans',sans-serif;font-size:11.5px"><i style="width:6.0px">0</i></span></div>
<div class="t" style="left:689.5px;top:361.5px;color:#000;font-family:'Liberation Sans',sans-serif;font-size:12.6px;"><span style="font-family:'Liberation Sans',sans-serif;font-size:11.5px"><i style="width:6.0px">0</i></span></div>
<div class="t" style="left:746.5px;top:361.5px;color:#000;font-family:'Liberation Sans',sans-serif;font-size:12.6px;"><span style="font-family:'Liberation Sans',sans-serif;font-size:11.5px"><i style="width:6.0px">0</i></span></div>
<div class="t" style="left:879.5px;top:361.5px;color:#000;font-family:'Liberation Sans',sans-serif;font-size:12.6px;"><span style="font-family:'Liberation Sans',sans-serif;font-size:11.5px"><i style="width:6.0px">2</i><i style="width:6.0px">0</i></span><b style="font-size:12.6px;letter-spacing:-1.00px">个</b></div>
<svg style="position:absolute;left:15px;top:331px" width="8" height="12"><path d="M1 0.5L7 6L1 11.5Z" fill="#000"/></svg>
<div class="t" style="left:25.8px;top:673px;color:#000;font-family:'Liberation Sans',sans-serif;font-size:12.6px;"><b style="font-size:12.6px;letter-spacing:-1.00px">记录数：</b></div>
<div class="t" style="left:88.5px;top:673px;color:#000;font-family:'Liberation Sans',sans-serif;font-size:12.6px;"><span style="font-family:'Liberation Sans',sans-serif;font-size:11.5px"><i style="width:6.0px">3</i></span></div>
<div class="t" style="left:513.5px;top:673px;color:#000;font-family:'Liberation Sans',sans-serif;font-size:12.6px;"><span style="font-family:'Liberation Sans',sans-serif;font-size:11.5px"><i style="width:6.0px">8</i><i style="width:6.0px">3</i></span></div>
<div class="t" style="left:617.5px;top:673px;color:#000;font-family:'Liberation Sans',sans-serif;font-size:12.6px;"><span style="font-family:'Liberation Sans',sans-serif;font-size:11.5px"><i style="width:6.0px">1</i><i style="width:6.0px">6</i><i style="width:6.0px">1</i><i style="width:6.0px">0</i><i style="width:6.0px">0</i></span></div>
<div class="t" style="left:746.5px;top:673px;color:#000;font-family:'Liberation Sans',sans-serif;font-size:12.6px;"><span style="font-family:'Liberation Sans',sans-serif;font-size:11.5px"><i style="width:6.0px">0</i></span></div>
<div style="position:absolute;left:995px;top:293px;width:16px;height:394px;background:linear-gradient(90deg,#f0f0f0,#fafafa);"></div>
<div style="position:absolute;left:995px;top:293px;width:16px;height:15px;background:linear-gradient(135deg,#ffffff,#e6e6e6);border-bottom:1px solid #d8d8d8;"></div>
<svg style="position:absolute;left:995px;top:293px" width="16" height="15"><path d="M8.1 6.6L11.2 10H4.9Z" fill="#000"/></svg>
<div style="position:absolute;left:996px;top:309px;width:14px;height:217px;background:linear-gradient(90deg,#d0d0dc,#ececf4 35%,#f2f2f8 50%,#d4d4e2);border:1px solid #9a9aa8;border-radius:2px;"></div>
<svg style="position:absolute;left:1000px;top:412px" width="7" height="9"><path d="M0.3 1H6.2M0.3 4H6.2M0.3 7H6.2" stroke="#8a8070" stroke-width="1.3"/></svg>
<div style="position:absolute;left:995px;top:672px;width:16px;height:15px;background:linear-gradient(135deg,#ffffff,#e0e0e0);border-top:1px solid #d8d8d8;"></div>
<svg style="position:absolute;left:995px;top:672px" width="16" height="15"><path d="M8.1 8.8L11.2 5.4H4.9Z" fill="#000"/></svg>
<div style="position:absolute;left:8px;top:694px;width:1008px;height:17px;background:#0075a8;"></div>
<div class="t" style="left:14.5px;top:696px;color:#fff;font-family:'Liberation Sans',sans-serif;font-size:12.6px;"><span style="font-family:'Liberation Sans',sans-serif;font-size:11.5px;letter-spacing:-0.3px">F2-</span><span style="font-size:12.6px;letter-spacing:-1.00px">导出</span><span style="font-family:'Liberation Sans',sans-serif;font-size:11.5px;letter-spacing:-0.3px"> F3-</span><span style="font-size:12.6px;letter-spacing:-1.00px">打印</span><span style="font-family:'Liberation Sans',sans-serif;font-size:11.5px;letter-spacing:-0.3px"> F4-</span><span style="font-size:12.6px;letter-spacing:-1.00px">查看明细</span><span style="font-family:'Liberation Sans',sans-serif;font-size:11.5px;letter-spacing:-0.3px"> F5-</span><span style="font-size:12.6px;letter-spacing:-1.00px">批次查询</span><span style="font-family:'Liberation Sans',sans-serif;font-size:11.5px;letter-spacing:-0.3px"> F6-</span><span style="font-size:12.6px;letter-spacing:-1.00px">商品分布</span><span style="font-family:'Liberation Sans',sans-serif;font-size:11.5px;letter-spacing:-0.3px"> F7-</span><span style="font-size:12.6px;letter-spacing:-1.00px">调整均价</span><span style="font-family:'Liberation Sans',sans-serif;font-size:11.5px;letter-spacing:-0.3px"> Esc-</span><span style="font-size:12.6px;letter-spacing:-1.00px">退出</span></div>
<div style="position:absolute;left:4px;top:715px;width:1016px;height:19px;background:#eeeeee;border-top:1px solid #fbf6f2;border-left:1px solid #fbf6f2;"></div>
<div style="position:absolute;left:5px;top:716px;width:123px;height:17px;border:1px solid #a8a8a8;border-right-color:#fff;border-bottom-color:#fff;"></div>
<div style="position:absolute;left:130px;top:716px;width:149px;height:17px;border:1px solid #a8a8a8;border-right-color:#fff;border-bottom-color:#fff;"></div>
<div style="position:absolute;left:281px;top:716px;width:303px;height:17px;border:1px solid #a8a8a8;border-right-color:#fff;border-bottom-color:#fff;"></div>
<div style="position:absolute;left:586px;top:716px;width:433px;height:17px;border:1px solid #a8a8a8;border-right-color:#fff;border-bottom-color:#fff;"></div>
<div class="t" style="left:7.5px;top:719px;color:#000;font-family:'Liberation Sans',sans-serif;font-size:12.6px;"><span style="font-family:'Liberation Sans',sans-serif;font-size:11.5px"><i style="width:6.0px">2</i><i style="width:6.0px">0</i><i style="width:6.0px">1</i><i style="width:6.0px">4</i><i style="width:6.0px">-</i><i style="width:6.0px">0</i><i style="width:6.0px">6</i><i style="width:6.0px">-</i><i style="width:6.0px">1</i><i style="width:6.0px">3</i><i style="width:6.0px">&nbsp;</i><i style="width:6.0px">1</i><i style="width:6.0px">7</i><i style="width:6.0px">:</i><i style="width:6.0px">0</i><i style="width:6.0px">0</i><i style="width:6.0px">:</i><i style="width:6.0px">0</i><i style="width:6.0px">2</i></span></div>
<div class="t" style="left:132.8px;top:718px;color:#000;font-family:'Liberation Sans',sans-serif;font-size:12.6px;"><b style="font-size:12.6px;letter-spacing:-1.00px">当前操作员：</b><span style="font-family:'Liberation Mono',monospace;font-size:11px"><i style="width:6.0px">a</i><i style="width:6.0px">d</i><i style="width:6.0px">m</i><i style="width:6.0px">i</i><i style="width:6.0px">n</i></span></div>
<div class="t" style="left:283.8px;top:718px;color:#000;font-family:'Liberation Sans',sans-serif;font-size:12.6px;"><b style="font-size:12.6px;letter-spacing:-1.00px">当前账套：演示数据库</b></div>
<div class="t" style="left:503.8px;top:718px;color:#0000ff;font-family:'Liberation Sans',sans-serif;font-size:12.6px;text-decoration:underline;"><b style="font-size:12.6px;letter-spacing:-1.00px">点击更换账套</b></div>
<svg style="position:absolute;left:1004px;top:718px" width="14" height="14"><g fill="#a8a8a8"><rect x="10" y="2" width="2" height="2"/><rect x="10" y="6" width="2" height="2"/><rect x="6" y="6" width="2" height="2"/><rect x="10" y="10" width="2" height="2"/><rect x="6" y="10" width="2" height="2"/><rect x="2" y="10" width="2" height="2"/></g></svg>
<div class="t" style="left:589.5px;top:718px;color:#000;font-family:'Liberation Sans',sans-serif;font-size:12.6px;"><span style="font-family:'Liberation Mono',monospace;font-size:11px"><i style="width:6.0px">F</i><i style="width:6.0px">2</i><i style="width:6.0px">-</i></span><b style="font-size:12.6px;letter-spacing:-1.00px">客户管理</b><span style="font-family:'Liberation Mono',monospace;font-size:11px"><i style="width:6.0px">&nbsp;</i><i style="width:6.0px">F</i><i style="width:6.0px">3</i><i style="width:6.0px">-</i></span><b style="font-size:12.6px;letter-spacing:-1.00px">库存状况</b><span style="font-family:'Liberation Mono',monospace;font-size:11px"><i style="width:6.0px">&nbsp;</i><i style="width:6.0px">F</i><i style="width:6.0px">4</i><i style="width:6.0px">-</i></span><b style="font-size:12.6px;letter-spacing:-1.00px">营业报表</b><span style="font-family:'Liberation Mono',monospace;font-size:11px"><i style="width:6.0px">&nbsp;</i><i style="width:6.0px">F</i><i style="width:6.0px">6</i><i style="width:6.0px">-</i></span><b style="font-size:12.6px;letter-spacing:-1.00px">提醒查询</b><span style="font-family:'Liberation Mono',monospace;font-size:11px"><i style="width:6.0px">&nbsp;</i><i style="width:6.0px">F</i><i style="width:6.0px">7</i><i style="width:6.0px">-</i></span><b style="font-size:12.6px;letter-spacing:-1.00px">换班操作</b></div></body></html>
